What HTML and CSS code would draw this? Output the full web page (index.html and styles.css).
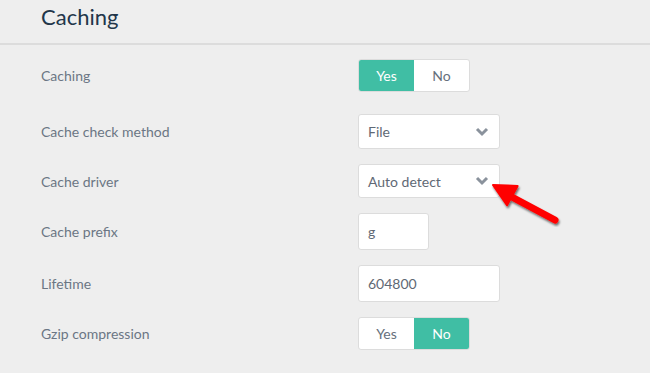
FILE: index.html
```html
<!DOCTYPE html>
<html lang="en">
<head>
    <meta charset="UTF-8">
    <title>Caching</title>
    <link rel="stylesheet" href="styles.css">
</head>
<body>
<div class="panel">
    <div class="panel-header">
        <h2>Caching</h2>
    </div>
    <div class="panel-body">
        <div class="row row-first">
            <label>Caching</label>
            <div class="toggle">
                <span class="toggle-opt active">Yes</span>
                <span class="toggle-opt">No</span>
            </div>
        </div>
        <div class="row">
            <label>Cache check method</label>
            <div class="select">
                <span>File</span>
                <svg class="chevron" width="14" height="10" viewBox="0 0 14 10"><path d="M2 2 L7 7 L12 2" fill="none" stroke="#8a929c" stroke-width="3"/></svg>
            </div>
        </div>
        <div class="row">
            <label>Cache driver</label>
            <div class="select select-short">
                <span>Auto detect</span>
                <svg class="chevron" width="14" height="10" viewBox="0 0 14 10"><path d="M2 2 L7 7 L12 2" fill="none" stroke="#8a929c" stroke-width="3"/></svg>
            </div>
        </div>
        <div class="row">
            <label>Cache prefix</label>
            <div class="input input-small">g</div>
        </div>
        <div class="row">
            <label>Lifetime</label>
            <div class="input">604800</div>
        </div>
        <div class="row">
            <label>Gzip compression</label>
            <div class="toggle">
                <span class="toggle-opt">Yes</span>
                <span class="toggle-opt active">No</span>
            </div>
        </div>
    </div>

    <!-- flecha roja que señala el selector -->
    <svg class="arrow" width="80" height="52" viewBox="0 0 80 52">
        <defs>
            <filter id="sh" x="-20%" y="-20%" width="140%" height="140%">
                <feDropShadow dx="1" dy="2" stdDeviation="1.2" flood-color="#000" flood-opacity="0.55"/>
            </filter>
        </defs>
        <g filter="url(#sh)">
            <path d="M67 41 L22 17" stroke="#f00" stroke-width="7" stroke-linecap="round"/>
            <path d="M5 6 L29.6 7 L19 26.2 Z" fill="#f00" stroke="#f00" stroke-width="2" stroke-linejoin="round"/>
        </g>
    </svg>
</div>
</body>
</html>
```

FILE: styles.css
```css
body {
    margin: 0;
    background: #eeeeee;
    font-family: 'Lato', 'Liberation Sans', sans-serif;
}

.panel {
    position: relative;
    width: 650px;
    height: 373px;
    overflow: hidden;
}

.panel-header {
    height: 45px;
    border-bottom: 2px solid #dcdcdc;
    padding-left: 41px;
    box-sizing: border-box;
}

    .panel-header h2 {
        margin: 0;
        padding-top: 4px;
        font-size: 22px;
        font-weight: 400;
        color: #22364a;
        line-height: 26px;
    }

.panel-body {
    padding: 14px 0 0 41px;
}

.row {
    display: flex;
    align-items: center;
    margin-bottom: 15px;
}

.row-first {
    margin-bottom: 22px;
}

    .row label {
        width: 317px;
        font-size: 14px;
        color: #6b7684;
    }

.toggle {
    display: flex;
    width: 112px;
    height: 33px;
    background: #fff;
    border: 1px solid #dcdcdc;
    border-radius: 3px;
    box-sizing: border-box;
    overflow: hidden;
}

.toggle-opt {
    flex: 1;
    display: flex;
    align-items: center;
    justify-content: center;
    font-size: 14px;
    color: #66707c;
}

    .toggle-opt.active {
        background: #40bea4;
        color: #fff;
    }

.select,
.input {
    display: flex;
    align-items: center;
    justify-content: space-between;
    width: 142px;
    height: 35px;
    padding: 0 10px 0 9px;
    background: #fff;
    border: 1px solid #dcdcdc;
    border-radius: 3px;
    box-sizing: border-box;
    font-size: 14px;
    color: #5f6975;
}

.select-short {
    height: 34px;
}

.input {
    height: 37px;
}

.input-small {
    width: 71px;
}

.chevron {
    display: block;
}

.arrow {
    position: absolute;
    left: 488px;
    top: 179px;
}
```
